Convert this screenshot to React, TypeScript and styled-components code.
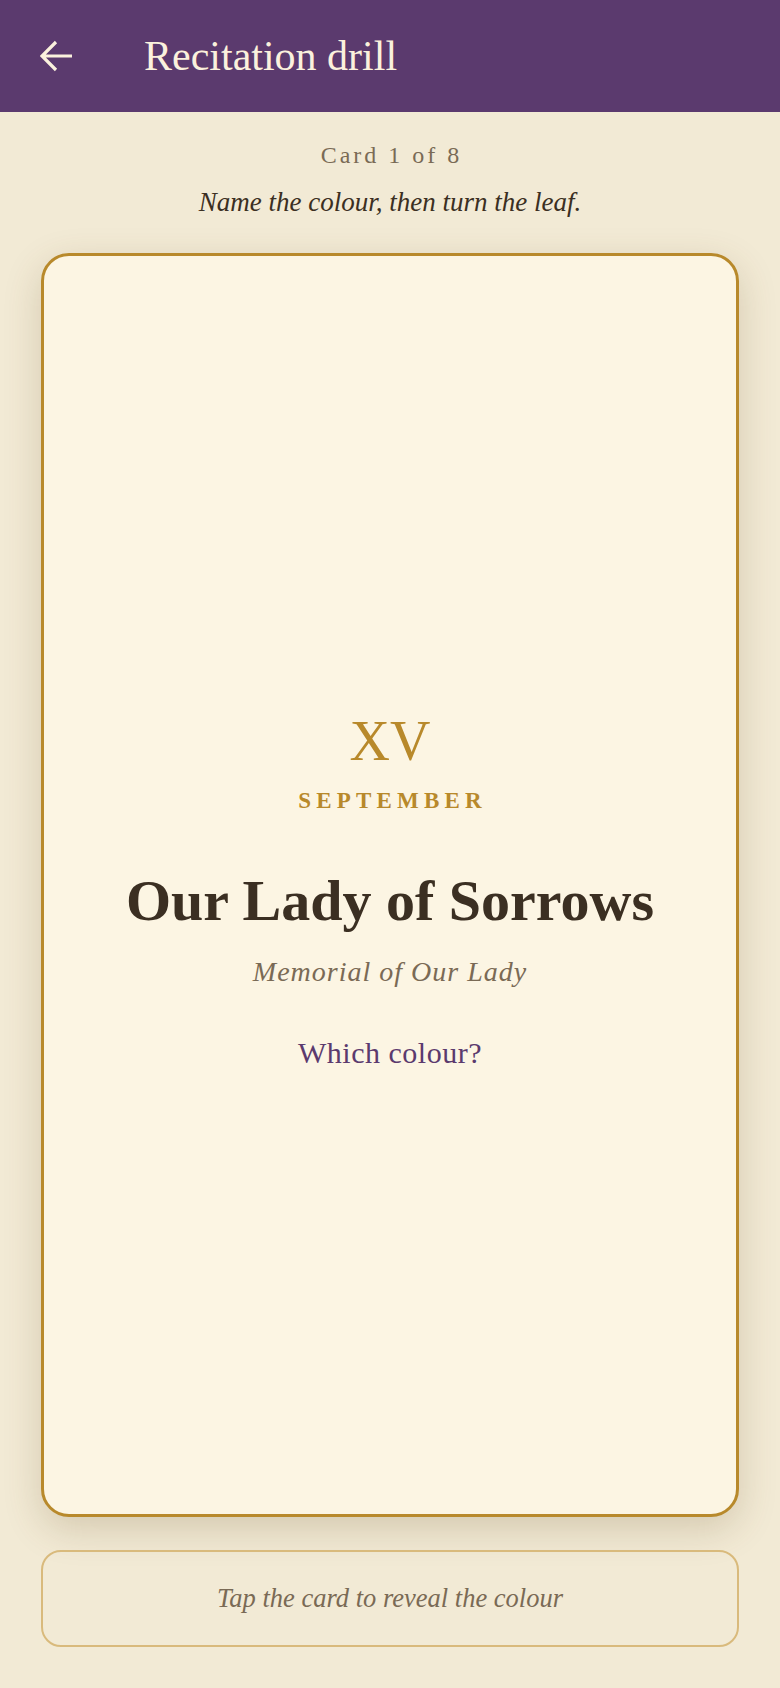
import React from "react";
import styled, { createGlobalStyle } from "styled-components";

const GlobalStyle = createGlobalStyle`
  html, body {
    margin: 0;
    padding: 0;
    background: #f2ead5;
  }
  * {
    box-sizing: border-box;
  }
`;

const serif = `"Liberation Serif", "Times New Roman", serif`;

const Page = styled.div`
  min-height: 100vh;
  display: flex;
  flex-direction: column;
  background: #f2ead5;
  font-family: ${serif};
`;

const TopBar = styled.header`
  height: 112px;
  flex: 0 0 auto;
  display: flex;
  align-items: center;
  gap: 72px;
  padding: 0 40px;
  background: #5b3a6e;
`;

const BackButton = styled.button`
  width: 32px;
  height: 32px;
  padding: 0;
  border: none;
  background: transparent;
  display: flex;
  align-items: center;
  justify-content: center;
  cursor: pointer;
`;

const BarTitle = styled.h1`
  margin: 0;
  font-family: ${serif};
  font-weight: 400;
  font-size: 42px;
  line-height: 48px;
  color: #fbf1dd;
`;

const Body = styled.main`
  flex: 1;
  display: flex;
  flex-direction: column;
  padding: 29px 41px 41px;
`;

const Counter = styled.div`
  text-align: center;
  font-size: 24px;
  line-height: 28px;
  letter-spacing: 3px;
  padding-left: 3px;
  color: #7a6a55;
`;

const Instruction = styled.p`
  margin: 17px 0 0;
  text-align: center;
  font-style: italic;
  font-size: 27px;
  line-height: 32px;
  color: #3b2f22;
`;

const Leaf = styled.section`
  flex: 1;
  margin-top: 35px;
  display: flex;
  flex-direction: column;
  align-items: center;
  justify-content: center;
  padding-top: 11px;
  background: #fcf5e3;
  border: 3px solid #b8892b;
  border-radius: 28px;
  box-shadow: 0 12px 38px rgba(95, 70, 25, 0.2);
  cursor: pointer;
`;

const DayNumeral = styled.div`
  font-size: 56px;
  line-height: 60px;
  color: #b8892b;
`;

const MonthName = styled.div`
  margin-top: 16px;
  font-size: 23px;
  line-height: 28px;
  font-weight: 700;
  letter-spacing: 5.2px;
  padding-left: 5.2px;
  color: #b8892b;
`;

const FeastName = styled.h2`
  margin: 52px 0 0;
  font-family: ${serif};
  font-size: 58px;
  line-height: 68px;
  font-weight: 700;
  color: #3b2f22;
  text-align: center;
`;

const Rank = styled.div`
  margin-top: 20px;
  font-style: italic;
  font-size: 28px;
  line-height: 34px;
  letter-spacing: 1px;
  color: #7a6a55;
`;

const Prompt = styled.div`
  margin-top: 46px;
  font-size: 30px;
  line-height: 36px;
  letter-spacing: 0.5px;
  color: #5b3a6e;
`;

const Hint = styled.div`
  margin-top: 33px;
  height: 97px;
  flex: 0 0 auto;
  display: flex;
  align-items: center;
  justify-content: center;
  border: 2px solid #d9ba7c;
  border-radius: 20px;
  font-style: italic;
  font-size: 26.5px;
  color: #7a6a55;
`;

function BackArrow() {
  return (
    <svg width="32" height="32" viewBox="0 0 32 32" fill="none">
      <path
        d="M16 2 L2 16 L16 30 M2 16 H32"
        stroke="#fbf1dd"
        strokeWidth="3.2"
        strokeLinejoin="miter"
      />
    </svg>
  );
}

export default function App() {
  return (
    <>
      <GlobalStyle />
      <Page>
        <TopBar>
          <BackButton aria-label="Back">
            <BackArrow />
          </BackButton>
          <BarTitle>Recitation drill</BarTitle>
        </TopBar>
        <Body>
          <Counter>Card 1 of 8</Counter>
          <Instruction>Name the colour, then turn the leaf.</Instruction>
          <Leaf>
            <DayNumeral>XV</DayNumeral>
            <MonthName>SEPTEMBER</MonthName>
            <FeastName>Our Lady of Sorrows</FeastName>
            <Rank>Memorial of Our Lady</Rank>
            <Prompt>Which colour?</Prompt>
          </Leaf>
          <Hint>Tap the card to reveal the colour</Hint>
        </Body>
      </Page>
    </>
  );
}
